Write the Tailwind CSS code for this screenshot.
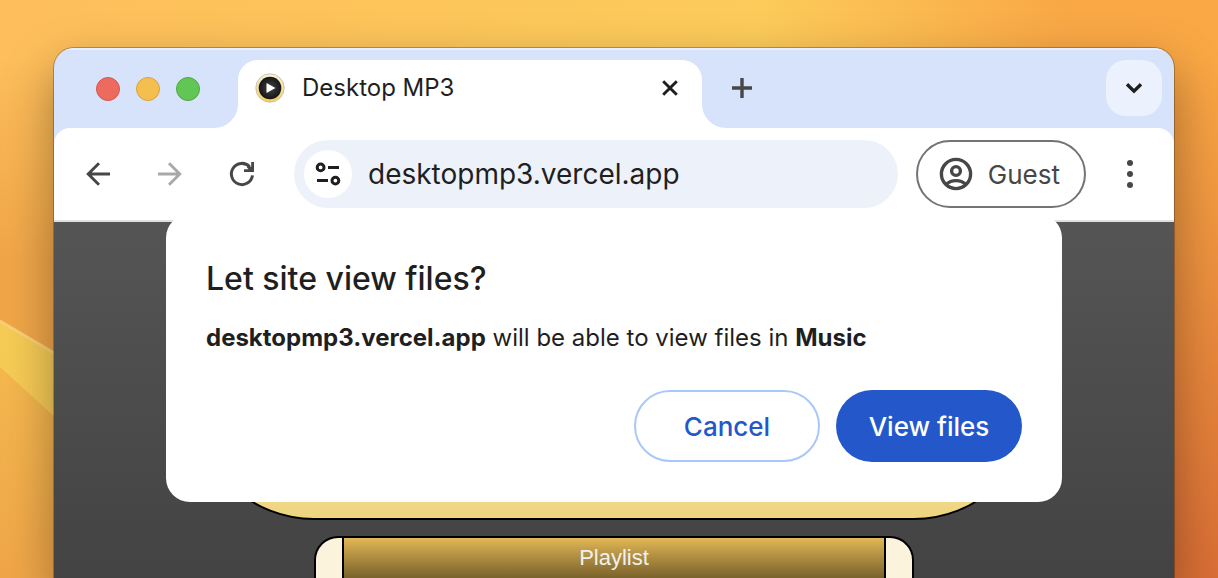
<!DOCTYPE html>
<html lang="en">
<head>
    <meta charset="UTF-8">
    <meta name="viewport" content="width=device-width, initial-scale=1.0">
    <title>Desktop MP3</title>
    <!-- Tailwind CSS CDN -->
    <script src="https://cdn.jsdelivr.net/npm/@tailwindcss/browser@4"></script>
</head>
<body class="relative h-screen overflow-hidden bg-[linear-gradient(95deg,#febe5b_0%,#fccb5a_60%,#f9a846_84%,#f9a744_100%)] font-['Inter',sans-serif] text-[#1f1f1f]">
    <!-- Wallpaper shading -->
    <div class="absolute inset-y-0 left-0 w-1/2 bg-linear-to-b from-transparent from-10% to-[#f0a648] to-45%"></div>
    <div class="absolute inset-y-0 right-0 w-1/4 bg-linear-to-b from-transparent from-10% to-[#d96e35]"></div>
    <svg class="absolute left-0 top-80 h-64 w-14" viewBox="0 0 56 256" fill="none">
        <defs>
            <linearGradient id="glow" x1="0" y1="0" x2="0" y2="1">
                <stop offset="0" stop-color="#f8c552" stop-opacity="0.7" />
                <stop offset="1" stop-color="#f8c552" stop-opacity="0" />
            </linearGradient>
        </defs>
        <path d="M0 0L56 33V256H0Z" fill="url(#glow)" />
        <path d="M0 0L56 33V98L0 47Z" fill="#f6cf58" fill-opacity="0.8" />
        <path d="M0 1L56 34" stroke="#ffd68c" stroke-opacity="0.6" stroke-width="3" />
    </svg>

    <div class="relative flex h-full flex-col pl-[54px] pr-11 pt-12">
        <!-- Browser window -->
        <div class="flex flex-1 flex-col overflow-hidden rounded-t-[20px] bg-[#d7e2fb] shadow-[0_0_0_1px_rgba(0,0,0,0.25),0_20px_50px_rgba(0,0,0,0.35)]">
            <!-- Tab strip -->
            <header class="flex h-20 items-end border-t-2 border-[#e9effd] pl-[42px] pr-3">
                <div class="mb-[27px] mr-[38px] flex gap-4">
                    <button aria-label="Close window" class="size-6 rounded-full border border-[#d9564c] bg-[#ed6a5f]"></button>
                    <button aria-label="Minimize window" class="size-6 rounded-full border border-[#dba13a] bg-[#f5bf4f]"></button>
                    <button aria-label="Zoom window" class="size-6 rounded-full border border-[#51a73f] bg-[#62c655]"></button>
                </div>
                <div class="relative flex h-17 w-116 items-center rounded-t-[20px] bg-white pb-3 pl-4 pr-5">
                    <svg class="absolute -left-6 bottom-0 size-6" viewBox="0 0 24 24" fill="#fff"><path d="M24 0V24H0A24 24 0 0 0 24 0Z" /></svg>
                    <svg class="absolute -right-6 bottom-0 size-6" viewBox="0 0 24 24" fill="#fff"><path d="M0 0V24H24A24 24 0 0 1 0 0Z" /></svg>
                    <svg class="mr-4 size-8" viewBox="0 0 32 32">
                        <defs>
                            <linearGradient id="ring" x1="0" y1="0" x2="0" y2="1">
                                <stop offset="0" stop-color="#fbf3dc" />
                                <stop offset="1" stop-color="#f5cd58" />
                            </linearGradient>
                            <radialGradient id="disc">
                                <stop offset="0" stop-color="#444" />
                                <stop offset="1" stop-color="#161616" />
                            </radialGradient>
                        </defs>
                        <circle cx="16" cy="16" r="14.2" fill="url(#ring)" stroke="#c9c2b2" />
                        <circle cx="16" cy="16" r="11.3" fill="url(#disc)" />
                        <path d="M12.5 11L21.500 16L12.500 21Z" fill="#fff" />
                    </svg>
                    <span class="flex-1 text-2xl">Desktop MP3</span>
                    <button aria-label="Close tab" class="size-6">
                        <svg class="size-6" viewBox="0 0 24 24" fill="none" stroke="currentColor" stroke-width="2.900"><path d="M5.200 5.200L18.800 18.800M18.800 5.200L5.200 18.800" /></svg>
                    </button>
                </div>
                <button aria-label="New tab" class="mb-7 ml-7 size-6 text-[#474747]">
                    <svg class="size-6" viewBox="0 0 24 24" fill="none" stroke="currentColor" stroke-width="3.400"><path d="M12 2V22M2 12H22" /></svg>
                </button>
                <button aria-label="Search tabs" class="mb-3 ml-auto flex size-14 items-center justify-center rounded-[20px] bg-[#ebf2fd]">
                    <svg class="size-6" viewBox="0 0 24 24" fill="none" stroke="currentColor" stroke-width="3.400"><path d="M5 8.200L12 15.100L19 8.200" /></svg>
                </button>
            </header>

            <!-- Toolbar -->
            <nav class="flex h-[94px] items-center rounded-t-[16px] border-b-2 border-[#e0e0e0] bg-white px-4 text-[#474747]">
                <div class="flex gap-4">
                    <button aria-label="Back" class="flex size-14 items-center justify-center">
                        <svg class="size-7" viewBox="0 0 28 28" fill="none" stroke="currentColor" stroke-width="2.900"><path d="M26 14H4.500M15 3.200L4.200 14L15 24.800" /></svg>
                    </button>
                    <button aria-label="Forward" class="flex size-14 items-center justify-center text-[#a9a9a9]">
                        <svg class="size-7" viewBox="0 0 28 28" fill="none" stroke="currentColor" stroke-width="2.900"><path d="M2 14H23.500M13 3.200L23.800 14L13 24.800" /></svg>
                    </button>
                    <button aria-label="Reload" class="flex size-14 items-center justify-center">
                        <svg class="size-7" viewBox="0 0 28 28" fill="none" stroke="currentColor" stroke-width="3">
                            <path d="M24.500 15.400A10.600 10.600 0 1 1 21.500 6.500" />
                            <path d="M26 2V12H16V9.200H20.500L18.800 7.200L20.800 5L23.200 7V2Z" fill="currentColor" stroke="none" />
                        </svg>
                    </button>
                </div>
                <div class="ml-6 flex h-17 flex-1 items-center rounded-full bg-[#edf2fa] pl-[10px] pr-6 text-[#1f1f1f]">
                    <button aria-label="View site information" class="mr-4 flex size-12 shrink-0 items-center justify-center rounded-full bg-white">
                        <svg class="size-7" viewBox="0 0 28 28" fill="none" stroke="currentColor" stroke-width="3">
                            <circle cx="6.600" cy="7.400" r="3.400" />
                            <path d="M14 7.400H25M3 20.600H14" />
                            <circle cx="21.400" cy="20.600" r="3.400" />
                        </svg>
                    </button>
                    <input aria-label="Address" type="text" value="desktopmp3.vercel.app" class="w-full min-w-0 bg-transparent text-[28px] outline-none">
                </div>
                <button class="ml-[18px] flex h-17 items-center gap-[14px] rounded-full border-2 border-[#747474] pl-5 pr-6 text-[26px]">
                    <svg class="size-9" viewBox="0 0 36 36" fill="none" stroke="currentColor" stroke-width="3.400">
                        <circle cx="18" cy="18" r="14.600" />
                        <circle cx="18" cy="15" r="4.400" />
                        <path d="M8 28.500C13.500 23.300 22.500 23.300 28 28.500" />
                    </svg>
                    Guest
                </button>
                <button aria-label="Menu" class="ml-4 flex size-14 items-center justify-center">
                    <svg class="size-8" viewBox="0 0 32 32" fill="currentColor"><circle cx="16" cy="5" r="3" /><circle cx="16" cy="16" r="3" /><circle cx="16" cy="27" r="3" /></svg>
                </button>
            </nav>

            <!-- Page content -->
            <main class="relative flex flex-1 flex-col items-center gap-4 bg-linear-to-b from-[#555] to-[#434343]">
                <div class="h-[298px] w-3/4 shrink-0 rounded-b-[120px] border-2 border-black bg-linear-to-b from-[#fbf3dc] from-50% to-[#eed47c]"></div>
                <section class="flex w-[600px] flex-1 rounded-t-3xl border-2 border-b-0 border-black bg-[#fcf3dc] px-[26px]">
                    <h2 class="flex-1 border-x-2 border-black bg-linear-to-b from-[#e2b857] to-[#7a622b] pt-1 text-center font-['Liberation_Sans',sans-serif] text-[22px] leading-8 text-[#f0f0f0]">Playlist</h2>
                </section>

                <!-- Permission dialog -->
                <div class="absolute inset-x-0 -top-2 flex justify-center">
                    <div role="dialog" aria-labelledby="dialog-title" class="w-4/5 rounded-3xl bg-white p-10">
                        <h1 id="dialog-title" class="text-[32px] font-medium leading-[50px]">Let site view files?</h1>
                        <p class="mt-[14px] text-2xl leading-10"><b class="font-bold">desktopmp3.vercel.app</b> will be able to view files in <b class="font-bold">Music</b></p>
                        <div class="mt-8 flex justify-end gap-4 text-[26px] font-medium">
                            <button class="h-18 w-[186px] rounded-full border-2 border-[#a8c7fa] text-[#2458ca]">Cancel</button>
                            <button class="h-18 w-[186px] rounded-full bg-[#2458ca] text-white">View files</button>
                        </div>
                    </div>
                </div>
            </main>
        </div>
    </div>
</body>
</html>
